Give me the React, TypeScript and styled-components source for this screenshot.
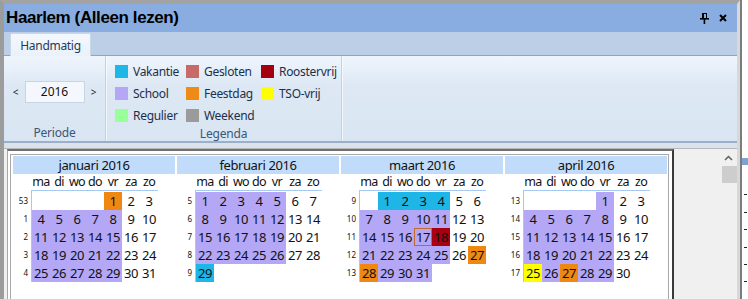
import * as React from "react"
import styled, { createGlobalStyle } from "styled-components"

const GlobalStyle = createGlobalStyle`
  html, body { margin: 0; padding: 0; background: #fff; }
  body { font-family: "Noto Sans", "Liberation Sans", sans-serif; overflow: hidden; }
`

type Kind = "school" | "vakantie" | "feestdag" | "roostervrij" | "tso" | "none"

const colors: Record<Kind, string> = {
  school: "#b4a7f6",
  vakantie: "#1eb6e6",
  feestdag: "#ee8813",
  roostervrij: "#a70011",
  tso: "#ffff00",
  none: "transparent",
}

const legend = [
  { label: "Vakantie", color: "#1db7e8" },
  { label: "Gesloten", color: "#c86a6a" },
  { label: "Roostervrij", color: "#a50010" },
  { label: "School", color: "#b3a7f6" },
  { label: "Feestdag", color: "#ee8a15" },
  { label: "TSO-vrij", color: "#ffff00" },
  { label: "Regulier", color: "#99ff99" },
  { label: "Weekend", color: "#9b9b9b" },
]

const monthNames = ["januari", "februari", "maart", "april"]
const dayNames = ["ma", "di", "wo", "do", "vr", "za", "zo"]

const special: Record<string, Kind> = {
  "1-1": "feestdag",
  "2-29": "vakantie",
  "3-1": "vakantie",
  "3-2": "vakantie",
  "3-3": "vakantie",
  "3-4": "vakantie",
  "3-18": "roostervrij",
  "3-27": "feestdag",
  "3-28": "feestdag",
  "4-25": "tso",
  "4-27": "feestdag",
}
const today = "3-17"

function isoWeek(d: Date) {
  const t = new Date(Date.UTC(d.getFullYear(), d.getMonth(), d.getDate()))
  const day = t.getUTCDay() || 7
  t.setUTCDate(t.getUTCDate() + 4 - day)
  const yearStart = new Date(Date.UTC(t.getUTCFullYear(), 0, 1))
  return Math.ceil(((t.getTime() - yearStart.getTime()) / 86400000 + 1) / 7)
}

function buildMonth(m: number) {
  const first = new Date(2016, m, 1)
  const lead = (first.getDay() + 6) % 7
  const days = new Date(2016, m + 1, 0).getDate()
  const cells: ({ day: number; kind: Kind; today: boolean } | null)[] = []
  for (let i = 0; i < lead; i++) cells.push(null)
  for (let d = 1; d <= days; d++) {
    const key = `${m + 1}-${d}`
    const dow = (new Date(2016, m, d).getDay() + 6) % 7
    const kind: Kind = special[key] ?? (dow < 5 ? "school" : "none")
    cells.push({ day: d, kind, today: key === today })
  }
  while (cells.length % 7) cells.push(null)
  const weeks: number[] = []
  for (let r = 0; r < cells.length / 7; r++) {
    const monday = new Date(2016, m, 1 - lead + r * 7)
    weeks.push(isoWeek(monday))
  }
  return { cells, weeks }
}

const PinIcon = () => (
  <svg width="11" height="12" viewBox="0 0 11 12">
    <rect x="3.5" y="1.5" width="4" height="5" fill="none" stroke="#000" />
    <rect x="3" y="1" width="2" height="6" fill="#000" />
    <rect x="1" y="6" width="9" height="1.6" fill="#000" />
    <rect x="4.6" y="7" width="1.6" height="5" fill="#000" />
  </svg>
)

const CloseIcon = () => (
  <svg width="8" height="8" viewBox="0 0 8 8">
    <path d="M1 1 L7 7 M7 1 L1 7" stroke="#000" strokeWidth="2" />
  </svg>
)

export default function App() {
  const months = React.useMemo(() => [0, 1, 2, 3].map(buildMonth), [])

  return (
    <Page>
      <GlobalStyle />
      <Window>
        <TitleBar>
          <Title>Haarlem (Alleen lezen)</Title>
          <TitleButtons>
            <PinIcon />
            <CloseIcon />
          </TitleButtons>
        </TitleBar>

        <TabStrip>
          <TabGap />
          <Tab>Handmatig</Tab>
          <TabRest />
        </TabStrip>

        <Ribbon>
          <Group $width={102}>
            <PeriodBody>
              <Arrow>&lt;</Arrow>
              <YearBox>2016</YearBox>
              <Arrow>&gt;</Arrow>
            </PeriodBody>
            <GroupLabel>Periode</GroupLabel>
          </Group>
          <Group $width={236}>
            <LegendBody>
              {legend.map((l) => (
                <LegendItem key={l.label}>
                  <Swatch style={{ background: l.color }} />
                  <span>{l.label}</span>
                </LegendItem>
              ))}
            </LegendBody>
            <GroupLabel>Legenda</GroupLabel>
          </Group>
        </Ribbon>
        <RibbonFoot />

        <Content>
          <Pane>
            <CalendarBox>
              {months.map((mo, i) => (
                <Month key={i}>
                  <MonthHeader>{monthNames[i]} 2016</MonthHeader>
                  <DayNames>
                    {dayNames.map((d) => (
                      <span key={d}>{d}</span>
                    ))}
                  </DayNames>
                  <MonthBody>
                    <WeekCol>
                      {mo.weeks.map((w, r) => (
                        <WeekNum key={r}>{w}</WeekNum>
                      ))}
                    </WeekCol>
                    <DayGrid>
                      {mo.cells.map((c, k) =>
                        c ? (
                          <DayCell key={k} $bg={colors[c.kind]} $today={c.today}>
                            {c.day}
                          </DayCell>
                        ) : (
                          <DayCell key={k} $bg="transparent" />
                        )
                      )}
                    </DayGrid>
                  </MonthBody>
                </Month>
              ))}
            </CalendarBox>
          </Pane>
          <Gutter />
          <ScrollBar>
            <ScrollArrow>
              <svg width="9" height="6" viewBox="0 0 9 6">
                <path d="M1 5 L4.5 1.5 L8 5" fill="none" stroke="#606060" strokeWidth="1.5" />
              </svg>
            </ScrollArrow>
            <Thumb />
          </ScrollBar>
        </Content>
      </Window>
      <Behind>
        <BehindTab />
        {[0, 1, 2, 3, 4, 5].map((i) => (
          <BehindMark key={i} />
        ))}
      </Behind>
    </Page>
  )
}

/* ---------------- styles ---------------- */

const Page = styled.div`
  width: 748px;
  height: 299px;
  display: flex;
  overflow: hidden;
`

const Window = styled.div`
  width: 740px;
  height: 299px;
  box-sizing: border-box;
  display: flex;
  flex-direction: column;
  border-top: 4px solid #a3a3a3;
  border-left: 4px solid #9c9c9c;
  border-right: 3px solid #d8d8d8;
`

const TitleBar = styled.div`
  height: 28px;
  flex: none;
  background: #89ade1;
  display: flex;
  align-items: center;
  justify-content: space-between;
  padding: 0 10px 0 2px;
`

const Title = styled.div`
  font-family: "Liberation Sans", Arial, sans-serif;
  font-weight: bold;
  font-size: 17px;
  letter-spacing: -0.4px;
  color: #000;
`

const TitleButtons = styled.div`
  display: flex;
  align-items: center;
  gap: 9px;
`

const TabStrip = styled.div`
  height: 24px;
  flex: none;
  box-sizing: border-box;
  padding-top: 1px;
  background: #bdcfe6;
  display: flex;
`

const TabGap = styled.div`
  width: 6px;
  border-bottom: 1px solid #8fa4bf;
`

const TabRest = styled.div`
  flex: 1;
  border-bottom: 1px solid #8fa4bf;
`

const Tab = styled.div`
  width: 81px;
  box-sizing: border-box;
  border: 1px solid #cad7e8;
  border-bottom: none;
  border-radius: 2px 2px 0 0;
  background: linear-gradient(#f4f8fe, #eaf1fa);
  font-size: 12px;
  letter-spacing: -0.3px;
  color: #1e3a5c;
  display: flex;
  align-items: center;
  justify-content: center;
`

const Ribbon = styled.div`
  height: 85px;
  flex: none;
  display: flex;
  background: linear-gradient(#eff5fd 0%, #dde8f4 35%, #d9e5f2 100%);
`

const Group = styled.div<{ $width: number }>`
  width: ${(p) => p.$width}px;
  box-sizing: border-box;
  display: flex;
  flex-direction: column;
  border-right: 1px solid #c3d2e4;
  box-shadow: 1px 0 0 rgba(255, 255, 255, 0.6);
`

const GroupLabel = styled.div`
  height: 16px;
  line-height: 15px;
  text-align: center;
  font-size: 12px;
  letter-spacing: -0.2px;
  color: #3d5676;
`

const PeriodBody = styled.div`
  flex: 1;
  display: flex;
  align-items: center;
  justify-content: center;
  gap: 6px;
  padding-top: 2px;
`

const Arrow = styled.span`
  font-size: 10px;
  color: #1e2a3c;
  width: 6px;
  text-align: center;
`

const YearBox = styled.div`
  width: 60px;
  height: 22px;
  box-sizing: border-box;
  border: 1px solid #c6d4e5;
  background: #f4f8fd;
  font-size: 12px;
  color: #111;
  display: flex;
  align-items: center;
  justify-content: center;
`

const LegendBody = styled.div`
  flex: 1;
  display: grid;
  grid-template-columns: 71px 75px auto;
  grid-auto-rows: 22px;
  padding: 4px 0 0 9px;
`

const LegendItem = styled.div`
  display: flex;
  align-items: center;
  gap: 5px;
  font-size: 12px;
  letter-spacing: -0.3px;
  color: #1d2f4c;
  white-space: nowrap;
`

const Swatch = styled.span`
  width: 13px;
  height: 13px;
  flex: none;
`

const RibbonFoot = styled.div`
  height: 8px;
  flex: none;
  box-sizing: border-box;
  border-top: 2px solid #9bafcb;
  border-bottom: 1px solid #b8b8b8;
  background: #dae2ec;
`

const Content = styled.div`
  flex: 1;
  min-height: 0;
  display: flex;
  background: #f0f0f0;
`

const Pane = styled.div`
  width: 667px;
  margin-left: 3px;
  box-sizing: border-box;
  border-top: 2px solid #6f6f6f;
  border-left: 1px solid #a8a8a8;
  border-right: 2px solid #3a3a3a;
  background: #fff;
  padding: 3px 3px 0 2px;
  display: flex;
`

const CalendarBox = styled.div`
  flex: 1;
  box-sizing: border-box;
  border-top: 1px solid #a8a8a8;
  border-left: 1px solid #a8a8a8;
  border-right: 1px solid #a8a8a8;
  padding: 1px 0 0 2px;
  display: flex;
  gap: 2px;
  font-size: 13px;
  letter-spacing: -0.4px;
  color: #111;
`

const Month = styled.div`
  width: 162px;
  display: flex;
  flex-direction: column;
`

const MonthHeader = styled.div`
  height: 18px;
  line-height: 18px;
  background: #c1dcfa;
  text-align: center;
`

const DayNames = styled.div`
  height: 16px;
  line-height: 16px;
  display: grid;
  grid-template-columns: repeat(7, 18px);
  padding-left: 19px;
  text-align: center;
  font-size: 12.5px;
  letter-spacing: -0.6px;
`

const MonthBody = styled.div`
  display: flex;
`

const WeekCol = styled.div`
  width: 18px;
  padding-top: 2px;
  display: flex;
  flex-direction: column;
`

const WeekNum = styled.div`
  height: 18px;
  line-height: 18px;
  font-size: 8px;
  letter-spacing: 0;
  text-align: right;
  padding-right: 3px;
`

const DayGrid = styled.div`
  border-top: 1px solid #a5c9f1;
  border-left: 1px solid #a5c9f1;
  padding-top: 1px;
  display: grid;
  grid-template-columns: repeat(7, 18px);
  grid-auto-rows: 18px;
`

const DayCell = styled.div<{ $bg: string; $today?: boolean }>`
  background: ${(p) => p.$bg};
  box-shadow: ${(p) => (p.$today ? "inset 0 0 0 1px #c3692b" : "none")};
  line-height: 18px;
  text-align: center;
`

const Gutter = styled.div`
  flex: 1;
`

const ScrollBar = styled.div`
  width: 17px;
  display: flex;
  flex-direction: column;
`

const ScrollArrow = styled.div`
  height: 17px;
  display: flex;
  align-items: center;
  justify-content: center;
`

const Thumb = styled.div`
  margin-left: 2px;
  width: 15px;
  height: 17px;
  background: #cdcdcd;
`

const Behind = styled.div`
  flex: 1;
  border-left: 2px solid #7c7c7c;
  background: #fff;
  display: flex;
  flex-direction: column;
  padding-top: 158px;
`

const BehindTab = styled.div`
  height: 15px;
  background: #7ea3cf;
  margin-bottom: 29px;
`

const BehindMark = styled.div`
  width: 3px;
  height: 1px;
  margin: 0 0 17px 2px;
  background: #222;
`
